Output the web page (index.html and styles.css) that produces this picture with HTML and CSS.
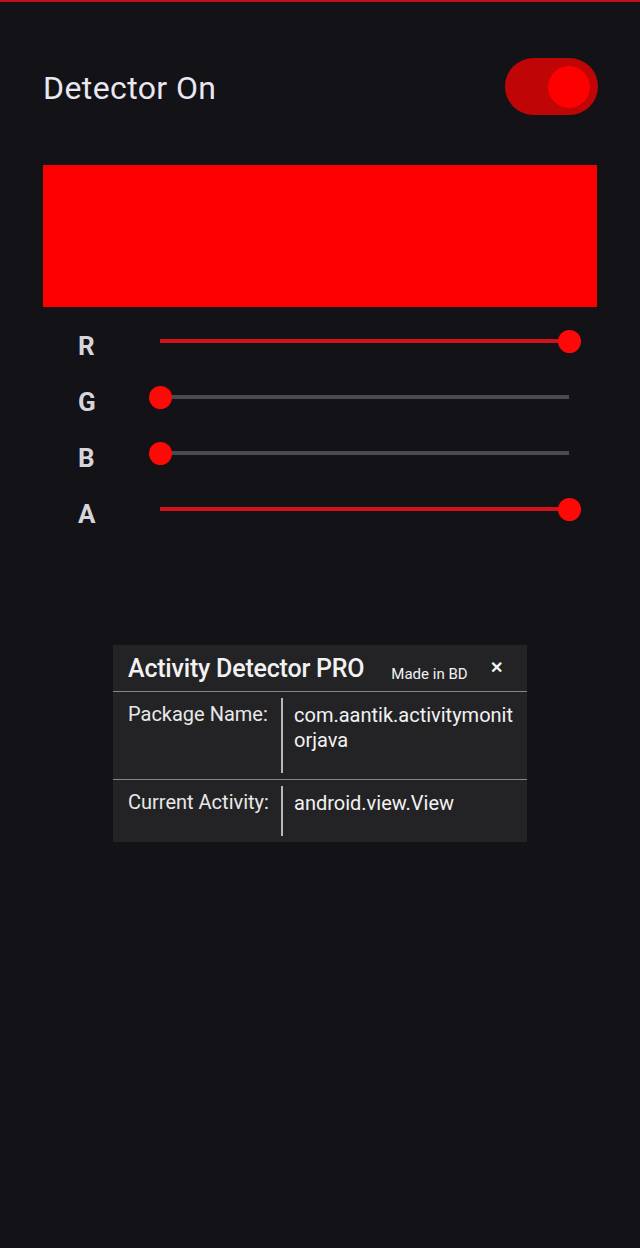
FILE: index.html
```html
<html>

<head>
    <title>Activity Detector</title>
    <link rel="stylesheet" href="styles.css">
</head>

<body>
    <div class="topline"></div>

    <div class="header">
        <p class="header-title">Detector On</p>
        <div class="toggle">
            <div class="toggle-thumb"></div>
        </div>
    </div>

    <div class="preview"></div>

    <div class="sliders">
        <div class="slider-row">
            <span class="slider-label">R</span>
            <div class="track">
                <div class="track-fill" style="width: 100%"></div>
                <div class="thumb" style="left: 100%"></div>
            </div>
        </div>
        <div class="slider-row">
            <span class="slider-label">G</span>
            <div class="track">
                <div class="track-fill" style="width: 0%"></div>
                <div class="thumb" style="left: 0%"></div>
            </div>
        </div>
        <div class="slider-row">
            <span class="slider-label">B</span>
            <div class="track">
                <div class="track-fill" style="width: 0%"></div>
                <div class="thumb" style="left: 0%"></div>
            </div>
        </div>
        <div class="slider-row">
            <span class="slider-label">A</span>
            <div class="track">
                <div class="track-fill" style="width: 100%"></div>
                <div class="thumb" style="left: 100%"></div>
            </div>
        </div>
    </div>

    <!-- Плавающее окно -->
    <div class="panel">
        <div class="panel-head">
            <span class="panel-title">Activity Detector PRO</span>
            <span class="panel-made">Made in BD</span>
            <span class="panel-close">&#x2715;</span>
        </div>
        <div class="panel-row">
            <div class="panel-key">Package Name:</div>
            <div class="panel-value">com.aantik.activitymonitorjava</div>
        </div>
        <div class="panel-row">
            <div class="panel-key">Current Activity:</div>
            <div class="panel-value">android.view.View</div>
        </div>
    </div>
</body>

</html>
```

FILE: styles.css
```css
body {
    font-family: Roboto, "Liberation Sans", sans-serif;
    background-color: #131217;
    margin: 0;
    padding: 0;
}

.topline {
    height: 2px;
    background-color: #c3121c;
}

.header {
    display: flex;
    align-items: center;
    justify-content: space-between;
    margin: 56px 42px 0 43px;
    height: 57px;
}

.header-title {
    margin: 2px 0 0 0;
    font-size: 32px;
    letter-spacing: 0.4px;
    color: #e9e7ef;
}

.toggle {
    width: 93px;
    height: 57px;
    border-radius: 29px;
    background-color: #bf0505;
    display: flex;
    align-items: center;
    justify-content: flex-end;
    padding-right: 8px;
    box-sizing: border-box;
}

.toggle-thumb {
    width: 42px;
    height: 42px;
    border-radius: 50%;
    background-color: #ff0000;
}

.preview {
    margin: 50px 43px 0 43px;
    height: 142px;
    background-color: #ff0000;
}

.sliders {
    margin-top: 6px;
    padding-left: 78px;
}

.slider-row {
    display: flex;
    align-items: center;
    height: 56px;
}

.slider-label {
    width: 82px;
    margin-top: 10px;
    font-size: 26px;
    font-weight: bold;
    color: #d6d4dd;
}

.track {
    position: relative;
    width: 409px;
    height: 4px;
    background-color: #4b4a51;
}

.track-fill {
    height: 100%;
    background-color: #d41018;
}

.thumb {
    position: absolute;
    top: 50%;
    width: 23px;
    height: 23px;
    margin: -11.5px 0 0 -11.5px;
    border-radius: 50%;
    background-color: #ff0808;
}

.panel {
    margin: 108px 0 0 113px;
    width: 414px;
    background-color: #232325;
    color: #f2f2f2;
}

.panel-head {
    display: flex;
    align-items: center;
    height: 46px;
    padding-left: 15px;
    border-bottom: 1.5px solid #85858a;
}

.panel-title {
    font-size: 25px;
    font-weight: 500;
    letter-spacing: -0.2px;
}

.panel-made {
    font-size: 15px;
    margin: 11px 0 0 27px;
}

.panel-close {
    font-size: 16px;
    font-weight: bold;
    margin-left: 22px;
    margin-top: -2px;
}

.panel-row {
    display: flex;
    padding: 6px 0;
}

.panel-row + .panel-row {
    border-top: 1.5px solid #85858a;
}

.panel-key {
    width: 153px;
    padding: 4px 0 0 15px;
    font-size: 20px;
    line-height: 25px;
    color: #e8e8e8;
}

.panel-value {
    flex: 1;
    border-left: 2px solid #b8b8bb;
    padding: 5px 8px 20px 11px;
    font-size: 20px;
    line-height: 25px;
    word-break: break-all;
}
```
